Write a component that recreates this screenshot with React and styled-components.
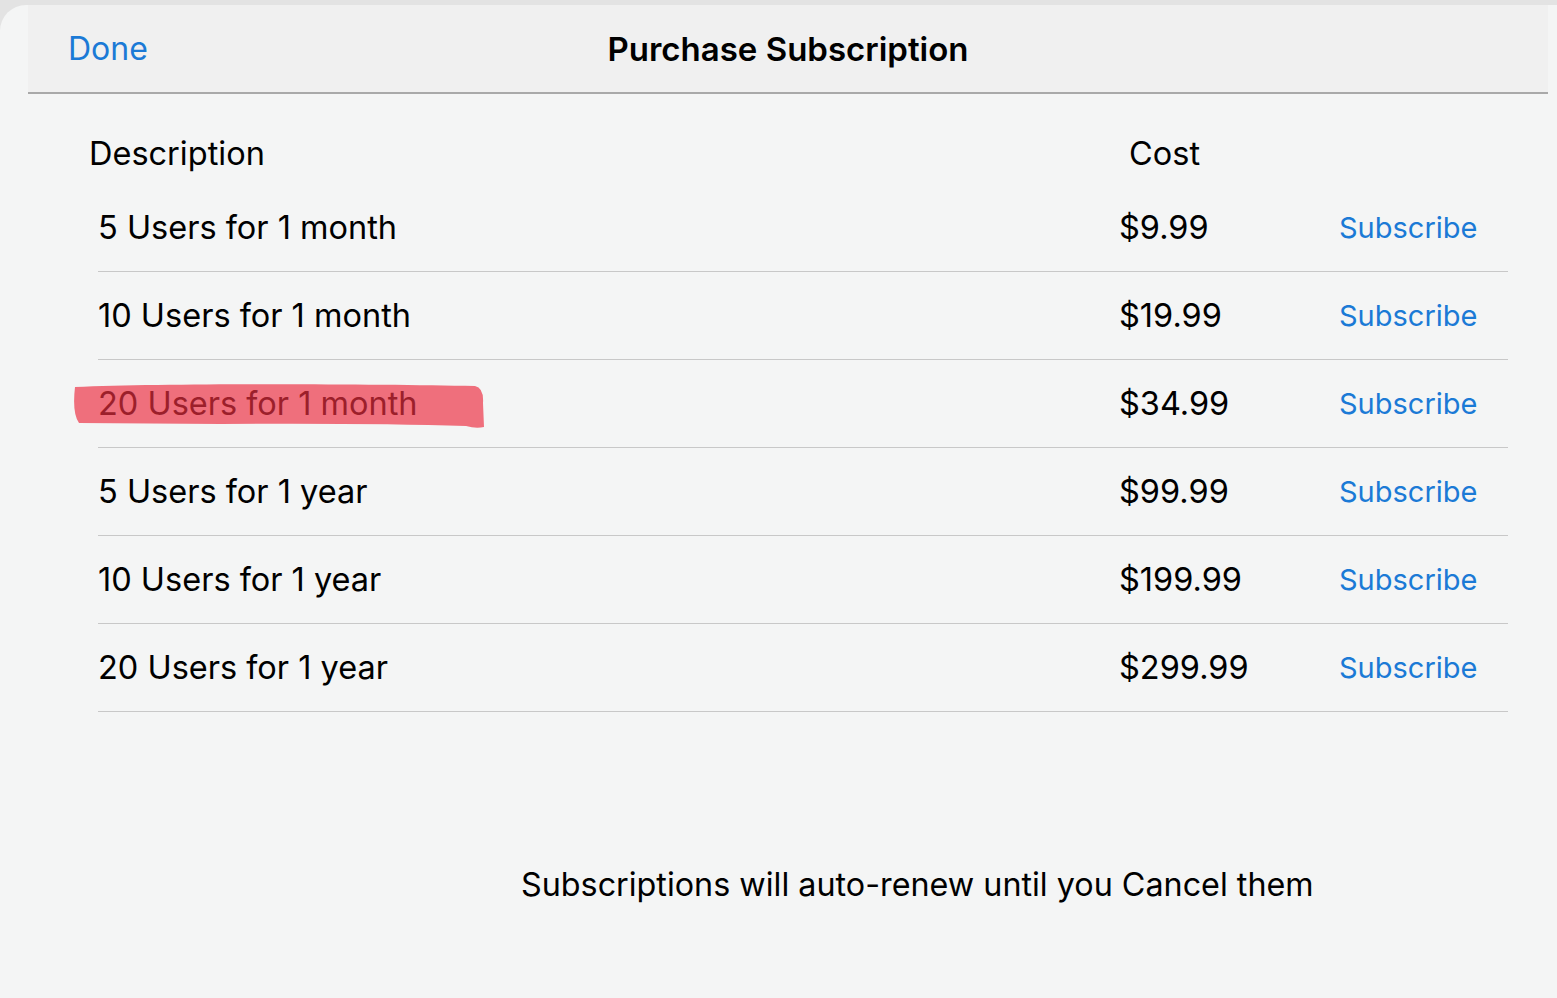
import React from 'react'
import styled, { createGlobalStyle } from 'styled-components'

const plans = [
  { label: '5 Users for 1 month', cost: '$9.99' },
  { label: '10 Users for 1 month', cost: '$19.99' },
  { label: '20 Users for 1 month', cost: '$34.99', marked: true },
  { label: '5 Users for 1 year', cost: '$99.99' },
  { label: '10 Users for 1 year', cost: '$199.99' },
  { label: '20 Users for 1 year', cost: '$299.99' },
]

const Global = createGlobalStyle`
  html, body {
    margin: 0;
    background: #e3e3e3;
  }
  body {
    font-family: Inter, "Liberation Sans", sans-serif;
    color: #000;
  }
`

const Frame = styled.div`
  padding-top: 5px;
  height: 998px;
  box-sizing: border-box;
  overflow: hidden;
`

const Sheet = styled.div`
  height: 993px;
  background: #f4f5f5;
  border-top-left-radius: 26px;
  display: flex;
  flex-direction: column;
`

const NavBar = styled.header`
  margin: 0 9px 0 28px;
  height: 87px;
  background: #f0f0f0;
  border-bottom: 2px solid #a9a9a9;
  display: flex;
  align-items: center;
  position: relative;
  padding-left: 40px;
`

const Done = styled.button`
  border: 0;
  background: none;
  padding: 0;
  font: inherit;
  font-size: 32px;
  color: #1b7ad6;
  cursor: pointer;
`

const Title = styled.h1`
  position: absolute;
  left: 0;
  right: 0;
  margin: 0;
  text-align: center;
  font-size: 33px;
  font-weight: 600;
  pointer-events: none;
`

const Table = styled.div`
  padding: 32px 0 0 98px;
  width: 1410px;
`

const HeadRow = styled.div`
  display: grid;
  grid-template-columns: 1040px 1fr;
  height: 54px;
  margin: 0 0 4px -9px;
  align-items: center;
  font-size: 32.5px;
`

const Row = styled.div`
  display: grid;
  grid-template-columns: 1021px 221px 1fr;
  align-items: center;
  height: 87px;
  border-bottom: 1px solid #c8c8c8;
  font-size: 32.5px;
`

const Label = styled.span`
  position: relative;
  z-index: 0;
  color: ${(p) => (p.$marked ? '#9c1f2b' : 'inherit')};
`

const Mark = styled.svg`
  position: absolute;
  z-index: -1;
  left: -27px;
  top: -3px;
  width: 416px;
  height: 50px;
  filter: blur(0.7px);
  pointer-events: none;
`

const Subscribe = styled.button`
  justify-self: start;
  border: 0;
  background: none;
  padding: 0;
  margin-left: -1px;
  font: inherit;
  font-size: 29px;
  color: #1b7ad6;
  cursor: pointer;
`

const Note = styled.p`
  margin: 153px 0 0 521px;
  font-size: 32.3px;
`

const Highlight = () => (
  <Mark viewBox="0 0 416 50">
    <path
      d="M4 6 C100 2 300 3 404 5 Q413 7 412 22 L413 46 Q405 48 395 45 Q300 42 150 43 L8 42 Q1 32 4 6 Z"
      fill="#ef6f7c"
    />
  </Mark>
)

export default function App() {
  return (
    <Frame>
      <Global />
      <Sheet>
        <NavBar>
          <Done>Done</Done>
          <Title>Purchase Subscription</Title>
        </NavBar>
        <Table>
          <HeadRow>
            <span>Description</span>
            <span>Cost</span>
          </HeadRow>
          {plans.map((p) => (
            <Row key={p.label}>
              <Label $marked={p.marked}>
                {p.marked && <Highlight />}
                {p.label}
              </Label>
              <span>{p.cost}</span>
              <Subscribe>Subscribe</Subscribe>
            </Row>
          ))}
        </Table>
        <Note>Subscriptions will auto-renew until you Cancel them</Note>
      </Sheet>
    </Frame>
  )
}
